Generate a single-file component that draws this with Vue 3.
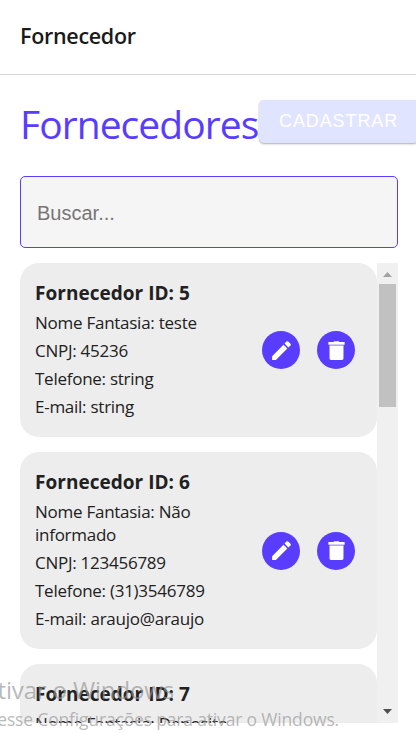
<script setup>
const suppliers = [
  { id: 5, lines: ['Nome Fantasia: teste', 'CNPJ: 45236', 'Telefone: string', 'E-mail: string'] },
  { id: 6, lines: ['Nome Fantasia: Não informado', 'CNPJ: 123456789', 'Telefone: (31)3546789', 'E-mail: araujo@araujo'] },
  { id: 7, lines: ['Nome Fantasia: Deposito'] }
]
</script>

<template>
  <div class="page">
    <header class="topbar"><span class="brand">Fornecedor</span></header>
    <main class="content">
      <div class="heading">
        <h1>Fornecedores</h1>
        <button class="create" disabled>CADASTRAR</button>
      </div>
      <input class="search" type="text" placeholder="Buscar..." />
      <div class="list">
        <div class="cards">
          <article v-for="s in suppliers" :key="s.id" class="card" :class="{ partial: s.lines.length < 4 }">
            <div class="info">
              <h2>Fornecedor ID: {{ s.id }}</h2>
              <p v-for="line in s.lines" :key="line">{{ line }}</p>
            </div>
            <div v-if="s.lines.length > 3" class="actions">
              <button class="round" aria-label="Editar">
                <svg viewBox="0 0 24 24"><path d="M3 17.4V21h3.6L17.6 10.1l-3.7-3.7zM20.9 6.9 21 5.9 18.2 3h-1.1l-2.2 2.3 3.7 3.8z" /></svg>
              </button>
              <button class="round" aria-label="Excluir">
                <svg viewBox="0 0 24 24"><path d="M5.3 7.4h13.4V19.6a1.4 1.4 0 0 1-1.4 1.4H6.7a1.4 1.4 0 0 1-1.4-1.4zM4.2 3.9H9L10 3h4l1 .9h4.8v2.5H4.2z" /><path class="seam" d="M5.3 6.4h13.4v1H5.3z" /></svg>
              </button>
            </div>
          </article>
        </div>
        <div class="scrollbar">
          <svg class="arrow up" viewBox="0 0 21 21"><path d="M6 14h9l-4.5-5z" /></svg>
          <div class="thumb"></div>
          <svg class="arrow down" viewBox="0 0 21 21"><path d="M6 7h9l-4.5 5z" /></svg>
        </div>
      </div>
    </main>
    <div class="watermark">
      <div class="mark-title">Ativar o Windows</div>
      <div class="mark-text">Acesse Configurações para ativar o Windows.</div>
    </div>
  </div>
</template>

<style>
body {
  margin: 0;
  background: #fff;
  overflow: hidden;
}
</style>

<style scoped>
.page {
  position: relative;
  width: 416px;
  height: 733px;
  overflow: hidden;
  box-sizing: border-box;
  font-family: "Open Sans", "Noto Sans", sans-serif;
  color: #212121;
}
.topbar {
  height: 75px;
  box-sizing: border-box;
  border-bottom: 1px solid #d6d6d6;
  padding: 20px 20px 0;
  line-height: 32px;
}
.brand {
  font-size: 21.5px;
  font-weight: 600;
  letter-spacing: -0.3px;
  color: #1a1a1a;
}
.content {
  padding: 25px 18px 0 20px;
}
.heading {
  display: flex;
  height: 76px;
}
h1 {
  margin: 0;
  width: 239px;
  flex: none;
  font-size: 39px;
  line-height: 48px;
  font-weight: 400;
  letter-spacing: -0.95px;
  color: #583dff;
  white-space: nowrap;
}
.create {
  flex: none;
  width: 160px;
  height: 43px;
  border: 0;
  border-radius: 5px;
  padding: 0 0 0 20px;
  text-align: left;
  background: #e1e4ff;
  box-shadow: 0 1px 2px rgba(0, 0, 0, 0.32);
  color: #fff;
  font: 18px "Liberation Sans", sans-serif;
  letter-spacing: 0.9px;
}
.search {
  display: block;
  width: 378px;
  height: 72px;
  box-sizing: border-box;
  border: 1px solid #583dff;
  border-radius: 5px;
  padding: 2px 17px 0 16px;
  background: #f5f5f5;
  font: 20px "Liberation Sans", sans-serif;
}
.search::placeholder {
  color: #757575;
}
.list {
  display: flex;
  height: 460px;
  margin-top: 15px;
  overflow: hidden;
}
.cards {
  flex: 1;
  display: flex;
  flex-direction: column;
  gap: 15px;
}
.card {
  flex: none;
  display: flex;
  justify-content: space-between;
  align-items: center;
  box-sizing: border-box;
  border-radius: 19px;
  padding: 15px 22px 14px 15px;
  background: #ededed;
}
.card.partial {
  height: 174px;
  align-items: flex-start;
}
.info {
  width: 195px;
}
h2 {
  margin: 0 0 4px;
  padding-top: 1px;
  font-size: 19px;
  line-height: 28px;
  font-weight: 700;
  letter-spacing: 0.03px;
  white-space: nowrap;
}
p {
  margin: 0 0 5px;
  font-size: 17px;
  line-height: 23px;
  letter-spacing: -0.26px;
}
.actions {
  display: flex;
  gap: 17px;
  padding-bottom: 1px;
}
.round {
  display: flex;
  align-items: center;
  justify-content: center;
  width: 38px;
  height: 38px;
  border: 0;
  border-radius: 50%;
  padding: 0;
  background: #583dff;
}
.round svg {
  width: 25px;
  height: 25px;
  fill: #fff;
}
.seam {
  fill: #c9c1ff;
}
.scrollbar {
  display: flex;
  flex-direction: column;
  width: 21px;
  background: #f0f0f0;
}
.arrow {
  width: 21px;
  height: 21px;
}
.up {
  fill: #a3a3a3;
}
.down {
  margin-top: auto;
  fill: #505050;
}
.thumb {
  width: 17px;
  height: 123px;
  margin: 0 2px;
  background: #c1c1c1;
}
.watermark {
  position: absolute;
  left: -40px;
  top: 674px;
  width: 420px;
  color: rgba(150, 150, 150, 0.68);
  white-space: nowrap;
  display: grid;
}
.mark-title {
  width: 214px;
  display: flex;
  justify-content: flex-end;
  font-size: 24px;
  line-height: 32px;
  letter-spacing: -0.15px;
}
.mark-text {
  width: 379px;
  display: flex;
  justify-content: flex-end;
  font-size: 17.5px;
  line-height: 27px;
  letter-spacing: -0.17px;
}
</style>
